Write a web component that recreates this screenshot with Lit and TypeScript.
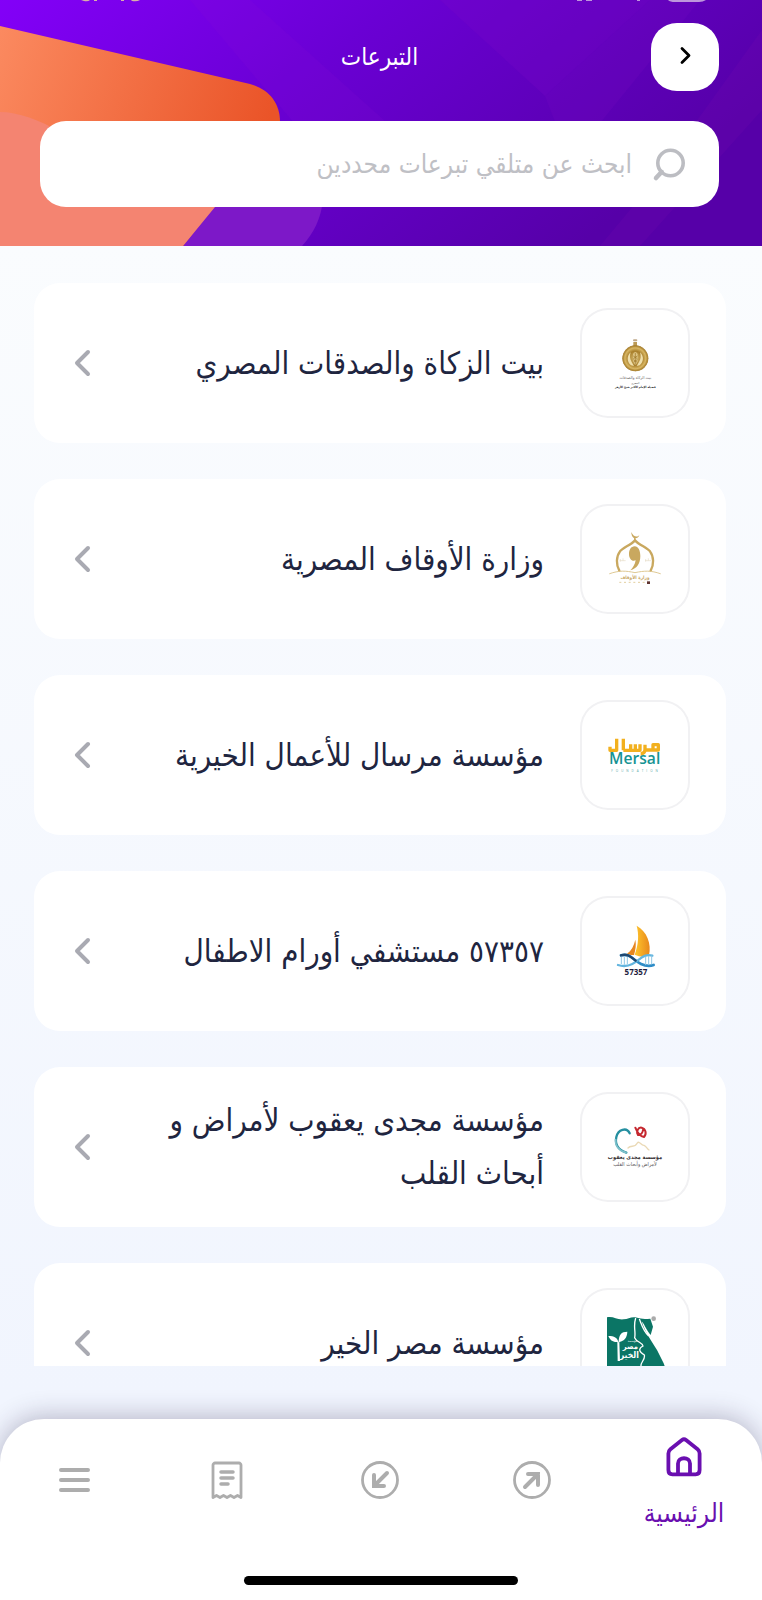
import { LitElement, html, css, svg } from "lit";
import { customElement, property, state } from "lit/decorators.js";
import { classMap } from "lit/directives/class-map.js";

const logos: Record<string, unknown> = {
  zakat: svg`<svg viewBox="30 36 330 330" aria-hidden="true">
    <defs><radialGradient id="g"><stop offset="0" stop-color="#d9bd72"/><stop offset=".55" stop-color="#a87f2c"/><stop offset=".8" stop-color="#d8b662"/><stop offset="1" stop-color="#9c7426"/></radialGradient></defs>
    <rect x="189" y="130" width="13" height="6" rx="3" fill="#c0a98a"/><rect x="190" y="138" width="11" height="13" fill="#bb9a55"/>
    <circle cx="196" cy="187" r="39" fill="url(#g)"/>
    <circle cx="196" cy="187" r="37" fill="none" stroke="#b38b38" stroke-width="3"/>
    <path d="M182 169c-13 12-11 29 1 39l9 2-7-12c-6-9-6-19-3-29zM210 169c13 12 11 29-1 39l-9 2 7-12c6-9 6-19 3-29z" fill="#efdfac"/>
    <path d="M189 174q7-12 14 0v24l-7 10-7-10z" fill="#dcc382"/><path d="M196 171v35M190 180l12 8m0-8l-12 8m0 3l12 8m0-8l-12 8" stroke="#9b7528" stroke-width="2"/>
    <text x="196" y="250" text-anchor="middle" font-size="12" fill="#66615c">بيت الزكاة والصدقات</text>
    <text x="196" y="263" text-anchor="middle" font-size="8" fill="#555">المصري</text>
    <text x="196" y="276" text-anchor="middle" font-size="9" font-weight="700" fill="#222">فضيلة الإمام الأكبر شيخ الأزهر</text></svg>`,
  awqaf: svg`<svg viewBox="30 26 330 330" aria-hidden="true">
    <g fill="none" stroke="#c9a85f" stroke-linecap="round">
    <path d="M148 226c-10-18-10-42 2-58 10-12 31-18 45-33 14 15 35 21 45 33 12 16 12 40 2 58" stroke-width="7"/>
    <path d="M119 235c28-10 48-9 76-3 28-6 48-7 76 3" stroke-width="3" stroke="#dfc994"/>
    <path d="M194 135v-6" stroke-width="4"/></g>
    <path d="M184 110c0 24 20 23 24 9-7 9-18 5-24-9z" fill="#c9a85f"/>
    <path d="M181 225c20-5 30-22 30-43 0-16-6-29-17-29-11 0-17 11-17 23 0 14 9 24 20 19-2 13-8 22-16 30z" fill="#c9a85f"/>
    <g stroke="#e5dcc7" stroke-width="2" fill="none"><path d="M149 196h18m-16-5v8m8-10v7m66 0h18m-16-5v8m8-10v7"/></g>
    <text x="195" y="250" text-anchor="middle" font-size="14" font-weight="700" fill="#c7a766">وزارة الأوقاف</text>
    <path d="M148 261h80" stroke="#e3cf9f" stroke-width="3" stroke-dasharray="6 8"/><rect x="231" y="258" width="9" height="8" fill="#5e3430"/></svg>`,
  mersal: svg`<svg viewBox="30 30 330 330" aria-hidden="true">
    <g fill="none" stroke="#f2b01e" stroke-width="10" stroke-linejoin="round"><path d="M120 170v11h20v-35M160 146v35M160 181h50v-18m-14 0v18m-14-18v18M212 191c10 0 13-6 13-13v-14M225 180h40v-16h-16v16"/></g>
    <text x="194" y="222" text-anchor="middle" class="latin" font-size="47" font-weight="600" fill="#169393">Mersal</text>
    <text x="198" y="245" text-anchor="middle" class="latin" font-size="9" letter-spacing="9" fill="#58a7a7">FOUNDATION</text></svg>`,
  hospital: svg`<svg viewBox="30 34 330 330" aria-hidden="true">
    <defs><linearGradient id="s"><stop offset="0" stop-color="#ffc72c"/><stop offset="1" stop-color="#e8881c"/></linearGradient></defs>
    <path d="M200 123c31 17 45 55 37 88-15 8-27 5-43-1 12-32 13-61 6-87z" fill="url(#s)"/>
    <path d="M196 165c-4 18-12 33-25 42 8 4 14 5 21 4 5-17 7-31 4-46z" fill="#e68620"/>
    <g fill="none" stroke-linecap="round"><path d="M153 212c26-8 37 15 60 26 15 7 28 7 38 3" stroke="#2e8cc7" stroke-width="8"/>
    <path d="M247 213c-26-8-38 14-60 25-16 8-28 8-43 3" stroke="#63b5df" stroke-width="7"/><path d="M153 212c22-6 29 5 44 16" stroke="#1f4770" stroke-width="7"/>
    <path d="M154 218v19m9-21v23m9-21v20m55-21v23m9-25v25m9-26v24" stroke="#8fc7e4" stroke-width="3"/></g>
    <text x="198" y="272" text-anchor="middle" class="latin" font-size="24" font-weight="700" fill="#1d1c3d">57357</text></svg>`,
  yacoub: svg`<svg viewBox="30 23 330 330" aria-hidden="true">
    <g fill="none" stroke-linecap="round"><path d="M179 147c-9-20-35-12-40 11-5 22 7 39 30 47" stroke="#258fa0" stroke-width="7"/><path d="M137 166c-2 20 11 33 31 39" stroke="#7fc1cb" stroke-width="5"/>
    <path d="M196 130c6 15 14 26 26 28 9-9 5-25-7-28-11-2-17 12-11 22 10-1 14-6 15-15" stroke="#c5282f" stroke-width="6"/>
    <path d="M174 191c10-11 19 2 28-15 6-8 11 8 20 7 7 3 9 10 15 14" stroke="#ead9b5" stroke-width="4"/></g>
    <text x="195" y="225" text-anchor="middle" font-size="17" font-weight="700" fill="#353033">مؤسسة مجدى يعقوب</text>
    <text x="195" y="244" text-anchor="middle" font-size="16" fill="#5b5658">لأمراض وأبحاث القلب</text></svg>`,
  misr: svg`<svg viewBox="30 87 330 330" aria-hidden="true">
    <path d="M111 175c19-4 29 8 50 6 13-1 22-8 35-6 20 6 29 5 45 4l8 24-7 25c-12-12-17-30-27-41 9 31 29 58 46 86l20 40 10 27H111z" fill="#0b7565"/>
    <path d="M197 177c-8 27 1 39-3 59 5 14 24 14 25 25-15 8-12 18 4 27 4 17-16 22-9 39M208 180c8 20 12 36 28 51" fill="none" stroke="#fff" stroke-width="4"/>
    <g fill="#fff"><path d="M146 251c0-24 8-33 26-33-1 19-9 27-24 31l2 57h-7l-1-57c-14 1-22-6-27-18 18 0 27 5 31 20z"/><text x="187" y="249" text-anchor="middle" font-size="9">مؤسسة</text><text x="181" y="270" text-anchor="middle" font-size="23" font-weight="700">مصر</text><text x="178" y="298" text-anchor="middle" font-size="26" font-weight="700">الخير</text></g>
    <circle cx="251" cy="179" r="7" fill="#aaa"/></svg>`,
};

const navIcons: Record<string, unknown> = {
  home: svg`<svg width="40" height="40" viewBox="0 0 40 40" aria-hidden="true"><g fill="none" stroke="currentColor" stroke-width="3.800" stroke-linejoin="round" stroke-linecap="round"><path d="M4.400 16.500c0-2 .6-3 2-4.200L18 3c1.500-1.200 2.500-1.200 4 0l11.600 9.300c1.400 1.200 2 2.200 2 4.200V33c0 3-1.200 4.300-4 4.300H8.400c-2.800 0-4-1.300-4-4.300z"/><path d="M14 37V26.500c0-7 12-7 12 0V37"/></g></svg>`,
  send: svg`<svg width="38" height="38" viewBox="0 0 38 38" aria-hidden="true"><g fill="none" stroke="currentColor" stroke-linecap="round"><circle cx="19" cy="19" r="17.500" stroke-width="2.800"/><path d="M12 26L25 13M15 13h10v11" stroke-width="4"/></g></svg>`,
  receive: svg`<svg width="38" height="38" viewBox="0 0 38 38" aria-hidden="true"><g fill="none" stroke="currentColor" stroke-linecap="round"><circle cx="19" cy="19" r="17.500" stroke-width="2.800"/><path d="M26 12L13 25M13 14v11h10" stroke-width="4"/></g></svg>`,
  bills: svg`<svg width="38" height="38" viewBox="0 0 38 38" aria-hidden="true"><g fill="none" stroke="currentColor" stroke-linecap="round" stroke-linejoin="round"><path d="M4 36.500V4c0-1 1-2 2-2h24c1 0 2 1 2 2v32.500l-3.500-2-3.500 2-3.500-2-3.500 2-3.500-2-3.500 2-3.500-2z" stroke-width="2.800"/><path d="M12 11h12M12 17h12M12 23h7" stroke-width="3.500"/></g></svg>`,
  menu: svg`<svg width="38" height="38" viewBox="0 0 38 38" aria-hidden="true"><path d="M4 9h27M4 19h27M4 29h27" fill="none" stroke="currentColor" stroke-width="4" stroke-linecap="round"/></svg>`,
};

interface Charity { name: string; logo: string; }

@customElement("charity-card")
class CharityCard extends LitElement {
  @property() name = "";
  @property() logo = "";

  static styles = css`
    :host { display: block; flex: none; }
    .card { box-sizing: border-box; display: flex; align-items: center; gap: 36px; width: 100%; min-height: 160px;
      padding: 25px 36px 25px 39px; border-radius: 26px; background: #fff; color: #20253f; text-decoration: none; }
    .tile { flex: none; width: 110px; height: 110px; border-radius: 28px; box-shadow: inset 0 0 0 2px #f1f1f3; }
    .tile svg { display: block; width: 100%; height: 100%; }
    .tile text { font-family: "DejaVu Sans Condensed", "DejaVu Sans", sans-serif; }
    .tile .latin { font-family: "Open Sans", sans-serif; }
    .name { flex: 1; margin-block: -8px; padding-inline-end: 16px; font-size: 31px; line-height: 53px; }
    .arrow { flex: none; width: 18px; height: 28px; }
  `;

  render() {
    return html`<a class="card" href="#">
      <span class="tile">${logos[this.logo]}</span>
      <span class="name">${this.name}</span>
      <svg class="arrow" viewBox="0 0 18 28" aria-hidden="true"><path d="M15 3L4 14l11 11" fill="none" stroke="#a9aab2" stroke-width="4" stroke-linecap="round" stroke-linejoin="round"/></svg>
    </a>`;
  }
}

@customElement("app-root")
class AppRoot extends LitElement {
  @state() private active = "home";

  private charities: Charity[] = [
    { name: "بيت الزكاة والصدقات المصري", logo: "zakat" },
    { name: "وزارة الأوقاف المصرية", logo: "awqaf" },
    { name: "مؤسسة مرسال للأعمال الخيرية", logo: "mersal" },
    { name: "٥٧٣٥٧ مستشفي أورام الاطفال", logo: "hospital" },
    { name: "مؤسسة مجدى يعقوب لأمراض و أبحاث القلب", logo: "yacoub" },
    { name: "مؤسسة مصر الخير", logo: "misr" },
  ];

  private tabs = [
    { id: "home", label: "الرئيسية" },
    { id: "send", label: "إرسال" },
    { id: "receive", label: "استلام" },
    { id: "bills", label: "الفواتير" },
    { id: "menu", label: "القائمة" },
  ];

  static styles = css`
    :host { display: flex; flex-direction: column; height: 100vh; overflow: hidden; direction: rtl;
      background: linear-gradient(#fafcfe 15%, #f1f5fe 87%);
      font-family: "DejaVu Sans Condensed", "DejaVu Sans", sans-serif; }
    .header { position: relative; flex: none; padding: 23px 43px 39px 40px; background: #6500cb; }
    .art { position: absolute; inset: 0; width: 100%; height: 100%; }
    .bar { position: relative; display: grid; grid-template-columns: 68px 1fr 68px; align-items: center; margin-bottom: 30px; }
    .back { display: grid; place-items: center; width: 68px; height: 68px; padding: 0; border: 0; border-radius: 26px; background: #fff; }
    .title { margin: 0; text-align: center; color: #fff; font-size: 24px; line-height: 40px; font-weight: 400; }
    .search { position: relative; display: flex; align-items: center; gap: 20px; height: 86px; padding: 0 32px; border-radius: 26px; background: #fff; }
    .search svg { flex: none; }
    .field { flex: 1; min-width: 0; padding: 0; border: 0; outline: 0; background: none; font: inherit; font-size: 26px; line-height: 40px; color: #20253f; }
    .field::placeholder { color: #bfc0c5; opacity: 1; }
    .list { flex: 1; min-height: 0; overflow: hidden; display: flex; flex-direction: column; gap: 36px; padding: 37px 36px 0 34px; margin-bottom: 53px; }
    .nav { flex: none; border-radius: 44px 44px 0 0; background: #fff; box-shadow: 0 -2px 26px rgba(40, 30, 70, 0.3); padding-bottom: 15px; }
    .tabs { display: grid; grid-template-columns: repeat(5, 1fr); height: 157px; padding-right: 2px; }
    .tab { display: flex; flex-direction: column; align-items: center; gap: 14px; padding: 42px 0 0; border: 0; background: none; color: #adadad; font: inherit; }
    .tab svg { flex: none; }
    .on { padding-top: 18px; color: #6a0fb0; }
    .label { font-size: 26px; line-height: 44px; }
    .pill { width: 36%; height: 9px; margin: 0 auto; border-radius: 5px; background: #000; }
  `;

  render() {
    return html`
      <header class="header">
        <svg class="art" viewBox="0 0 762 246" preserveAspectRatio="none" aria-hidden="true">
          <defs>
            <linearGradient id="bg" x1="0" y1="0" x2="1" y2=".4"><stop offset="0" stop-color="#8300f8"/><stop offset=".45" stop-color="#6a00d4"/><stop offset=".8" stop-color="#5d00b8"/><stop offset="1" stop-color="#5600a8"/></linearGradient>
            <linearGradient id="or" x1="0" y1="0" x2="1" y2=".3"><stop offset="0" stop-color="#fb8a60"/><stop offset="1" stop-color="#ea5428"/></linearGradient>
          </defs>
          <rect width="762" height="246" fill="url(#bg)"/>
          <path d="M190 0h60l145 130H300z" fill="#9010d8" opacity=".14"/>
          <path d="M440 0h210L545 96z" fill="#7c08c8" opacity=".25"/>
          <path d="M545 96L650 0h50L570 160z" fill="#8410c8" opacity=".14"/>
          <path d="M762 30v80L640 246h-40l50-60z" fill="#8410b4" opacity=".14"/>
          <path d="M215 200h108c-2 18-9 33-21 46H183z" fill="#7d18c8"/>
          <path d="M0 26l250 58c18 5 30 18 30 38L183 246H0z" fill="url(#or)"/>
          <path d="M0 112c18 0 40 8 60 20h163l-8 75-32 39H0z" fill="#f48471"/>
          <path d="M668 0h38q-3 2-7 2h-24q-5 0-7-2zM577 0h5v1h-5zM586 0h6v1h-6zM637 0h3v1h-3z" fill="#bd96dc"/>
          <path d="M81 0h9q-2 2-6 1zM94 0h3v1h-3zM121 0h3v1h-3zM131 0h9q-3 2-8 1z" fill="#d9b0a8"/>
        </svg>
        <div class="bar">
          <button class="back" aria-label="رجوع"><svg width="16" height="24" viewBox="0 0 16 24" aria-hidden="true"><path d="M5 3.500l7 7-7 7" fill="none" stroke="#000" stroke-width="2.800" stroke-linecap="round" stroke-linejoin="round"/></svg></button>
          <h1 class="title">التبرعات</h1>
        </div>
        <label class="search">
          <svg width="35" height="35" viewBox="0 0 35 35" aria-hidden="true"><circle cx="18.500" cy="16" r="12.700" fill="none" stroke="#bcbdc2" stroke-width="3.600"/><path d="M9.500 25l-5.500 6" stroke="#bcbdc2" stroke-width="4.500" stroke-linecap="round"/></svg>
          <input class="field" type="text" aria-label="بحث" placeholder="ابحث عن متلقي تبرعات محددين">
        </label>
      </header>
      <main class="list">
        ${this.charities.map((c) => html`<charity-card .name=${c.name} .logo=${c.logo}></charity-card>`)}
      </main>
      <nav class="nav">
        <div class="tabs">
          ${this.tabs.map((t) => html`
            <button class=${classMap({ tab: true, on: t.id === this.active })} aria-label=${t.label} @click=${() => (this.active = t.id)}>
              ${navIcons[t.id]}
              ${t.id === this.active ? html`<span class="label">${t.label}</span>` : null}
            </button>`)}
        </div>
        <div class="pill"></div>
      </nav>`;
  }
}
